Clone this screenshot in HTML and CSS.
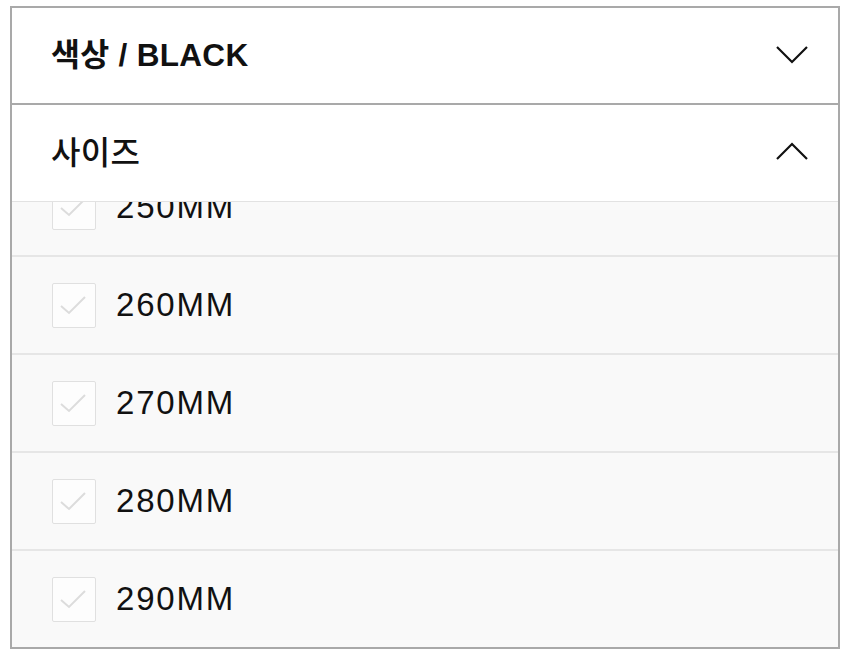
FILE: index.html
```html
<!DOCTYPE html>
<html lang="ko">
<head>
<meta charset="utf-8">
<title>옵션 선택</title>
<link rel="stylesheet" href="styles.css">
</head>
<body>
<div class="panel">
  <div class="header header-first">
    <span class="header-title">색상 / BLACK</span>
    <svg class="chevron" width="34" height="20" viewBox="0 0 34 20"><path d="M2 3 L17 18 L32 3" fill="none" stroke="#111" stroke-width="2.2"/></svg>
  </div>
  <div class="header header-second">
    <span class="header-title light">사이즈</span>
    <svg class="chevron" width="34" height="20" viewBox="0 0 34 20"><path d="M2 17 L17 2 L32 17" fill="none" stroke="#111" stroke-width="2.2"/></svg>
  </div>
  <div class="list-viewport">
    <ul class="list">
      <li class="row"><span class="box"><svg width="44" height="45" viewBox="0 0 44 45"><path d="M9 23 L17 30 L33 14" fill="none" stroke="#dcdcdc" stroke-width="2"/></svg></span><span class="label">250MM</span></li>
      <li class="row"><span class="box"><svg width="44" height="45" viewBox="0 0 44 45"><path d="M9 23 L17 30 L33 14" fill="none" stroke="#dcdcdc" stroke-width="2"/></svg></span><span class="label">260MM</span></li>
      <li class="row"><span class="box"><svg width="44" height="45" viewBox="0 0 44 45"><path d="M9 23 L17 30 L33 14" fill="none" stroke="#dcdcdc" stroke-width="2"/></svg></span><span class="label">270MM</span></li>
      <li class="row"><span class="box"><svg width="44" height="45" viewBox="0 0 44 45"><path d="M9 23 L17 30 L33 14" fill="none" stroke="#dcdcdc" stroke-width="2"/></svg></span><span class="label">280MM</span></li>
      <li class="row last"><span class="box"><svg width="44" height="45" viewBox="0 0 44 45"><path d="M9 23 L17 30 L33 14" fill="none" stroke="#dcdcdc" stroke-width="2"/></svg></span><span class="label">290MM</span></li>
    </ul>
  </div>
</div>
</body>
</html>
```

FILE: styles.css
```css
* { box-sizing: border-box; }
html, body {
  margin: 0;
  padding: 0;
  background: #ffffff;
}
body {
  padding: 6px 9px 0 10px;
  font-family: "Liberation Sans", "Noto Sans CJK KR", sans-serif;
  color: #111;
}
.panel {
  width: 830px;
  height: 643px;
  border: 2px solid #a9a9a9;
  display: flex;
  flex-direction: column;
  overflow: hidden;
  background: #f9f9f9;
}
.header {
  display: flex;
  align-items: center;
  justify-content: space-between;
  padding: 0 29px 0 39px;
  background: #ffffff;
  flex: none;
}
.header-first {
  height: 97px;
  border-bottom: 2px solid #a9a9a9;
}
.header-second {
  height: 97px;
  border-bottom: 1px solid #e2e2e2;
}
.header-title {
  font-size: 31.5px;
  font-weight: 700;
  letter-spacing: 0.3px;
  line-height: 1.2;
}
.header-title.light {
  font-weight: 500;
  font-size: 32px;
}
.chevron {
  display: block;
  margin-top: -3px;
}
.list-viewport {
  flex: 1;
  overflow: hidden;
}
.list {
  list-style: none;
  margin: -43px 0 0 0;
  padding: 0;
}
.row {
  height: 98px;
  border-bottom: 2px solid #e6e6e6;
  display: flex;
  align-items: center;
  padding-left: 40px;
  gap: 20px;
}
.box {
  width: 44px;
  height: 45px;
  border: 1.5px solid #e0e0e0;
  background: #fdfdfd;
  border-radius: 2px;
  display: flex;
  align-items: center;
  justify-content: center;
  flex: none;
}
.box svg {
  display: block;
  margin: -1.5px;
}
.label {
  font-size: 33px;
  letter-spacing: 1.8px;
  color: #111;
}
```
